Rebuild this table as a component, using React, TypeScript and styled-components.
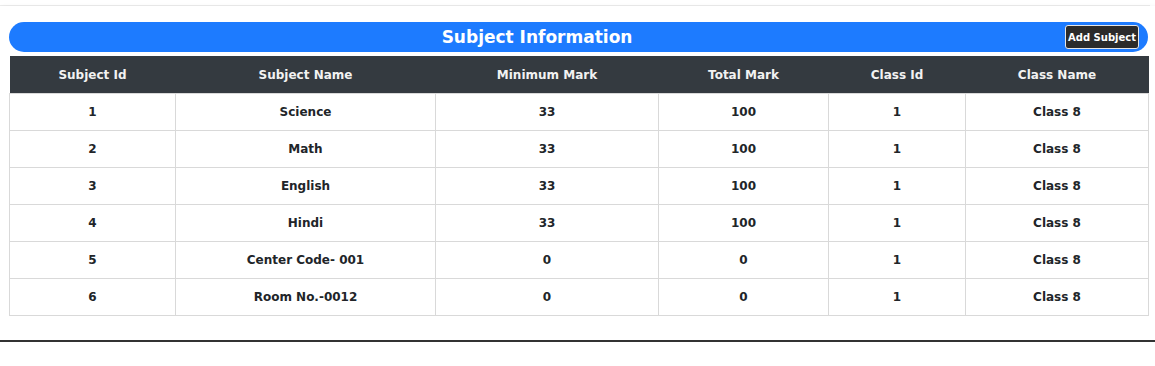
import * as React from 'react'
import styled, { createGlobalStyle } from 'styled-components'

const GlobalStyle = createGlobalStyle`
    body {
        margin: 0;
        background: #fff;
        font-family: "DejaVu Sans", Verdana, sans-serif;
    }
`

const TopStrip = styled.div`
    height: 5px;
    width: 1150px;
    border-bottom: 1px solid #ececec;
`

const Card = styled.section`
    width: 1143px;
    padding: 16px 5px 24px 9px;
    border-bottom: 2px solid #333;
    box-shadow: 2px 2px 5px rgba(0, 0, 0, 0.12);
    background: #fff;
`

const TitleBar = styled.div`
    display: flex;
    align-items: center;
    height: 30px;
    width: 1139px;
    background: #1d7bff;
    border-radius: 15px;
    margin-bottom: 4px;
`

const Title = styled.h2`
    flex: 1;
    margin: 0;
    text-align: center;
    color: #fff;
    font-size: 17px;
    font-weight: bold;
`

const AddButton = styled.button`
    height: 24px;
    padding: 0 2px;
    margin-right: 9px;
    background: #2b2b2b;
    color: #fff;
    border: 1px solid #e6e6e6;
    border-radius: 3px;
    font-family: "DejaVu Sans", Verdana, sans-serif;
    font-size: 10px;
    font-weight: bold;
`

const Table = styled.table`
    width: 1139px;
    border-collapse: collapse;
    table-layout: fixed;
    font-size: 12px;
    font-weight: bold;
`

const HeadCell = styled.th<{ $w: number }>`
    width: ${p => p.$w}px;
    height: 37px;
    padding: 0;
    background: #343a40;
    color: #f2f2f2;
    text-align: center;
`

const Cell = styled.td`
    height: 36px;
    padding: 0;
    text-align: center;
    color: #212529;
    border: 1px solid #d9d9d9;
`

const columns = [
    { label: 'Subject Id', w: 166 },
    { label: 'Subject Name', w: 260 },
    { label: 'Minimum Mark', w: 223 },
    { label: 'Total Mark', w: 170 },
    { label: 'Class Id', w: 137 },
    { label: 'Class Name', w: 183 },
]

const subjects = [
    [1, 'Science', 33, 100, 1, 'Class 8'],
    [2, 'Math', 33, 100, 1, 'Class 8'],
    [3, 'English', 33, 100, 1, 'Class 8'],
    [4, 'Hindi', 33, 100, 1, 'Class 8'],
    [5, 'Center Code- 001', 0, 0, 1, 'Class 8'],
    [6, 'Room No.-0012', 0, 0, 1, 'Class 8'],
]

export default function App() {
    return (
        <>
            <GlobalStyle />
            <TopStrip />
            <Card>
                <TitleBar>
                    <Title>Subject Information</Title>
                    <AddButton>Add Subject</AddButton>
                </TitleBar>
                <Table>
                    <thead>
                        <tr>
                            {columns.map(c => (
                                <HeadCell key={c.label} $w={c.w}>{c.label}</HeadCell>
                            ))}
                        </tr>
                    </thead>
                    <tbody>
                        {subjects.map(row => (
                            <tr key={row[0]}>
                                {row.map((v, i) => <Cell key={i}>{v}</Cell>)}
                            </tr>
                        ))}
                    </tbody>
                </Table>
            </Card>
        </>
    )
}
